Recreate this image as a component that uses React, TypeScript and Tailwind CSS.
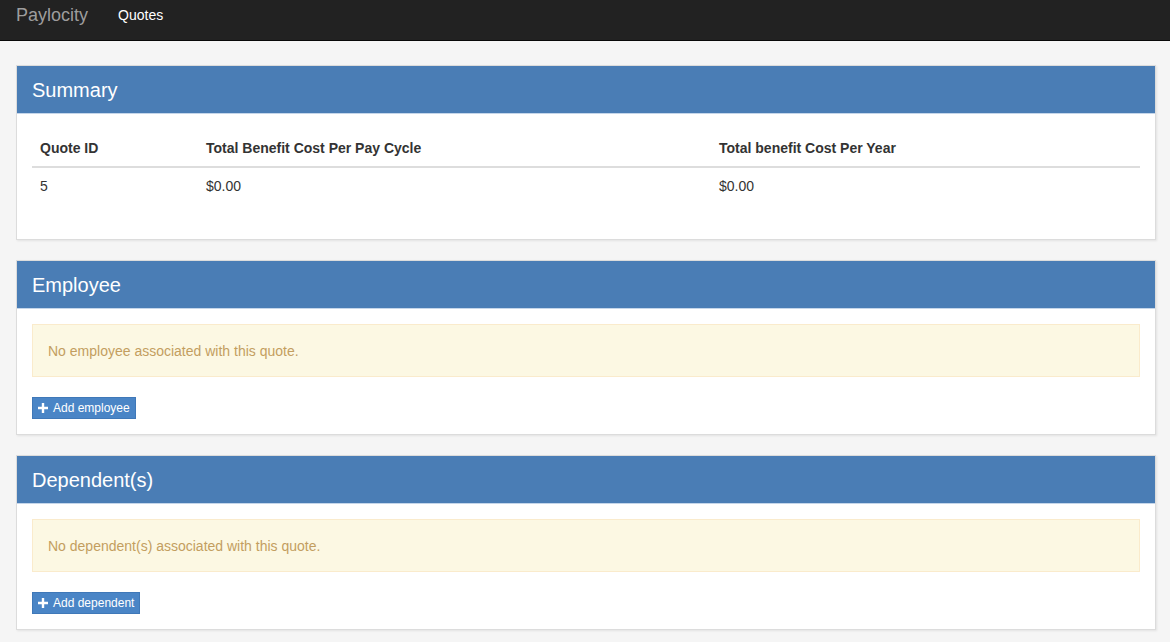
const font = { fontFamily: '"Liberation Sans", Arial, Helvetica, sans-serif' }

function PlusIcon() {
  return (
    <svg width="10" height="10" viewBox="0 0 10 10" className="shrink-0">
      <path d="M3.8 0h2.4v3.8H10v2.4H6.2V10H3.8V6.2H0V3.8h3.8z" fill="#fff" />
    </svg>
  )
}

function Panel({ title, children }: { title: string; children: React.ReactNode }) {
  return (
    <div className="mb-5 bg-white border border-[#dcdcdc] shadow-[1px_1px_2px_rgba(0,0,0,0.08)]">
      <div className="h-12 px-[15px] flex items-center bg-[#4a7db5] border-b border-[#c5d6ea]">
        <h2 className="text-[20px] leading-none text-white">{title}</h2>
      </div>
      <div className="p-[15px]">{children}</div>
    </div>
  )
}

function EmptyNotice({ text, action }: { text: string; action: string }) {
  return (
    <>
      <div className="mb-5 px-[15px] pt-[16px] pb-[15px] border border-[#faebcc] bg-[#fcf8e3] text-[#c39e5f] text-sm leading-5">
        {text}
      </div>
      <button className="h-[22px] px-[5px] flex items-center gap-[5px] bg-[#4a85c6] border border-[#3f78b8] text-white text-xs leading-none">
        <PlusIcon />
        {action}
      </button>
    </>
  )
}

export default function App() {
  return (
    <div style={font} className="min-h-[642px] bg-[#f5f5f5] text-[#333]">
      <nav className="h-[41px] bg-[#222] border-b border-[#080808] flex items-start px-4">
        <div className="h-[30px] flex items-center text-[18px] text-[#9d9d9d]">Paylocity</div>
        <div className="h-[30px] flex items-center ml-[30px] text-sm text-white">Quotes</div>
      </nav>

      <main className="pl-4 pr-[14px] pt-6">
        <Panel title="Summary">
          <div className="mb-5 text-sm">
            <div className="flex font-bold border-b-2 border-[#ddd]">
              <div className="w-[166px] px-2 pt-[9px] pb-2 leading-5">Quote ID</div>
              <div className="w-[513px] px-2 pt-[9px] pb-2 leading-5">Total Benefit Cost Per Pay Cycle</div>
              <div className="flex-1 px-2 pt-[9px] pb-2 leading-5">Total benefit Cost Per Year</div>
            </div>
            <div className="flex">
              <div className="w-[166px] px-2 py-2 leading-5">5</div>
              <div className="w-[513px] px-2 py-2 leading-5">$0.00</div>
              <div className="flex-1 px-2 py-2 leading-5">$0.00</div>
            </div>
          </div>
        </Panel>

        <Panel title="Employee">
          <EmptyNotice text="No employee associated with this quote." action="Add employee" />
        </Panel>

        <Panel title="Dependent(s)">
          <EmptyNotice text="No dependent(s) associated with this quote." action="Add dependent" />
        </Panel>
      </main>
    </div>
  )
}
